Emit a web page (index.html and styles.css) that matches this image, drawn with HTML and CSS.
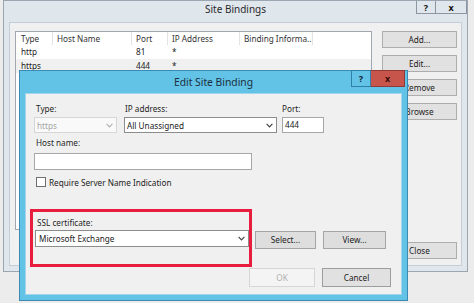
FILE: index.html
```html
<!DOCTYPE html>
<html>
<head>
<meta charset="utf-8">
<title>Site Bindings</title>
<link rel="stylesheet" href="styles.css">
</head>
<body>
<div class="win">
  <div class="win-title">
    <span class="cap-spacer"></span>
    <span class="cap-text">Site Bindings</span>
    <span class="cap-btns"><span class="cbtn help">?</span><span class="cbtn close">x</span></span>
  </div>
  <div class="win-client">
    <div class="list">
      <div class="lrow head"><span class="c1">Type</span><span>Host Name</span><span>Port</span><span>IP Address</span><span>Binding Informa...</span></div>
      <div class="lrow"><span class="c1">http</span><span></span><span>81</span><span>*</span><span></span></div>
      <div class="lrow sel"><span class="c1">https</span><span></span><span>444</span><span>*</span><span></span></div>
    </div>
    <div class="side">
      <div class="btn">Add...</div>
      <div class="btn">Edit...</div>
      <div class="btn">Remove</div>
      <div class="btn">Browse</div>
      <div class="btn close-btn">Close</div>
    </div>
  </div>
</div>

<div class="dlg">
  <div class="dlg-title">
    <span class="dcap-spacer"></span>
    <span class="dcap-text">Edit Site Binding</span>
    <span class="dcap-btns"><span class="dbtn dhelp">?</span><span class="dbtn dclose">x</span></span>
  </div>
  <div class="dlg-body">
    <div class="fields">
      <div class="f-type">
        <div class="lbl">Type:</div>
        <div class="combo disabled"><span>https</span><svg class="chev" width="7" height="5" viewBox="0 0 7 5"><polyline points="0.6,0.8 3.5,3.8 6.4,0.8" fill="none" stroke="#b3b3b3" stroke-width="1.2"/></svg></div>
      </div>
      <div class="f-ip">
        <div class="lbl">IP address:</div>
        <div class="combo"><span>All Unassigned</span><svg class="chev" width="7" height="5" viewBox="0 0 7 5"><polyline points="0.6,0.8 3.5,3.8 6.4,0.8" fill="none" stroke="#444" stroke-width="1.2"/></svg></div>
      </div>
      <div class="f-port">
        <div class="lbl">Port:</div>
        <div class="input port">444</div>
      </div>
    </div>
    <div class="lbl host-lbl">Host name:</div>
    <div class="input host"></div>
    <div class="check"><span class="box"></span><span>Require Server Name Indication</span></div>
    <div class="ssl-row">
      <div class="hilite">
        <div class="lbl">SSL certificate:</div>
        <div class="combo ssl"><span>Microsoft Exchange</span><svg class="chev" width="7" height="5" viewBox="0 0 7 5"><polyline points="0.6,0.8 3.5,3.8 6.4,0.8" fill="none" stroke="#444" stroke-width="1.2"/></svg></div>
      </div>
      <div class="btn sm sel-btn">Select...</div>
      <div class="btn sm view-btn">View...</div>
    </div>
    <div class="foot">
      <div class="btn ok">OK</div>
      <div class="btn cancel">Cancel</div>
    </div>
  </div>
</div>
</body>
</html>
```
FILE: styles.css
```css
* { box-sizing: border-box; }
html, body { margin: 0; padding: 0; }
body {
  width: 474px;
  height: 303px;
  overflow: hidden;
  position: relative;
  background: #ececec;
  font-family: "Noto Sans", "Open Sans", sans-serif;
  font-size: 8.2px;
  color: #222;
}

/* outer window */
.win {
  margin-left: 3px;
  width: 465px;
  height: 272px;
  border: 1px solid #9ba6b1;
  background: #dfe6ec;
  display: flex;
  flex-direction: column;
}
.win-title { height: 21px; display: flex; align-items: flex-start; flex: none; }
.cap-spacer { width: 51px; flex: none; }
.cap-text { flex: 1; text-align: center; font-size: 10px; line-height: 16px; color: #2a2a2a; }
.cap-btns { display: flex; flex: none; }
.cbtn {
  height: 13px;
  border: 1px solid #8b96a1;
  border-top: none;
  display: flex;
  align-items: center;
  justify-content: center;
  font-weight: bold;
  font-size: 9px;
  color: #111;
}
.help { width: 20px; }
.close { width: 31px; border-left: none; }

.win-client {
  flex: 1;
  margin: 0 5px 5px;
  background: #f0f0f0;
  border: 1px solid #c5ced6;
  padding: 8px 4px 6px 5px;
  display: flex;
  gap: 10px;
}
.list {
  width: 357px;
  height: 199px;
  background: #fff;
  border: 1px solid #a0a7b0;
}
.lrow {
  display: grid;
  grid-template-columns: 37px 79px 36px 72px 73px;
  height: 14px;
  line-height: 14px;
}
.lrow span { padding-left: 4px; white-space: nowrap; overflow: hidden; }
.lrow span.c1 { padding-left: 5px; }
.lrow.head { height: 13px; line-height: 13px; }
.head span { border-right: 1px solid #e3e3e3; color: #333; }
.sel { background: #f0f0f0; }

.side { width: 75px; display: flex; flex-direction: column; gap: 7px; }
.btn {
  height: 17px;
  line-height: 15px;
  text-align: center;
  background: #e1e1e1;
  border: 1px solid #adadad;
  color: #222;
  white-space: nowrap;
}
.close-btn { margin-top: auto; }

/* dialog */
.dlg {
  position: absolute;
  left: 19px;
  top: 70px;
  width: 389px;
  height: 231px;
  border: 1px solid #3a8ab3;
  background: #62c3e7;
  display: flex;
  flex-direction: column;
}
.dlg-title { height: 22px; display: flex; flex: none; }
.dcap-spacer { width: 56px; flex: none; }
.dcap-text { flex: 1; text-align: center; font-size: 10.3px; line-height: 22px; color: #1b2f3c; }
.dcap-btns { display: flex; flex: none; margin-right: 2px; margin-top: -1px; }
.dbtn {
  height: 17px;
  display: flex;
  align-items: center;
  justify-content: center;
  font-weight: bold;
  font-size: 9px;
}
.dhelp { width: 20px; border: 1px solid #2f7fa9; color: #10222e; }
.dclose { width: 34px; background: #c8554c; border: 1px solid #8f3a35; border-left: none; color: #3a0b08; }

.dlg-body {
  flex: 1;
  margin: 0 5px 5px;
  background: #f0f0f0;
  border: 1px solid #a3d6eb;
  padding: 9px 10px 0 8px;
}
.fields { display: flex; }
.f-type { width: 83px; }
.f-ip { width: 153px; margin-left: 7px; }
.f-port { width: 42px; margin-left: 5px; }
.lbl { height: 12px; line-height: 12px; white-space: nowrap; color: #262626; }
.f-type .lbl { padding-left: 2px; }
.f-ip .lbl { padding-left: 1px; }

.combo {
  margin-top: 2px;
  height: 16px;
  border: 1px solid #8d8d8d;
  background: #fff;
  display: flex;
  align-items: center;
  justify-content: space-between;
  padding: 0 3px 0 2px;
  white-space: nowrap;
}
.combo.disabled { border-color: #d6d6d6; background: #f9f9f9; color: #a6a6a6; }
.chev { flex: none; display: block; }

.input {
  height: 16px;
  line-height: 14px;
  border: 1px solid #a7a7a7;
  background: #fff;
  padding-left: 2px;
}
.port { margin-top: 2px; }
.host-lbl { margin-top: 4px; padding-left: 2px; }
.host { margin-top: 4px; width: 218px; height: 17px; }

.check {
  margin-top: 6px;
  margin-left: 2px;
  height: 12px;
  display: flex;
  align-items: center;
  gap: 3px;
  white-space: nowrap;
}
.box { width: 10px; height: 10px; border: 1px solid #6f6f6f; background: #fff; flex: none; }

.ssl-row { margin-top: 21px; margin-left: -4px; display: flex; align-items: flex-start; }
.hilite {
  width: 222px;
  height: 58px;
  border: 3px solid #e81c3c;
  padding: 5px 0 0 2px;
  flex: none;
}
.hilite .lbl { padding-left: 2px; }
.combo.ssl { margin-top: 1px; height: 17px; width: 214px; padding-left: 3px; }
.sm { margin-top: 22px; height: 18px; line-height: 16px; background: #dedede; border-color: #a5a5a5; flex: none; }
.sel-btn { width: 61px; margin-left: 3px; }
.view-btn { width: 63px; margin-left: 7px; }

.foot { margin-top: 1px; display: flex; justify-content: flex-end; gap: 7px; }
.ok { width: 66px; height: 19px; line-height: 17px; background: #f4f4f4; border-color: #d6d6d6; color: #b0b0b0; }
.cancel { width: 69px; height: 19px; line-height: 17px; border-color: #9d9d9d; }
```
